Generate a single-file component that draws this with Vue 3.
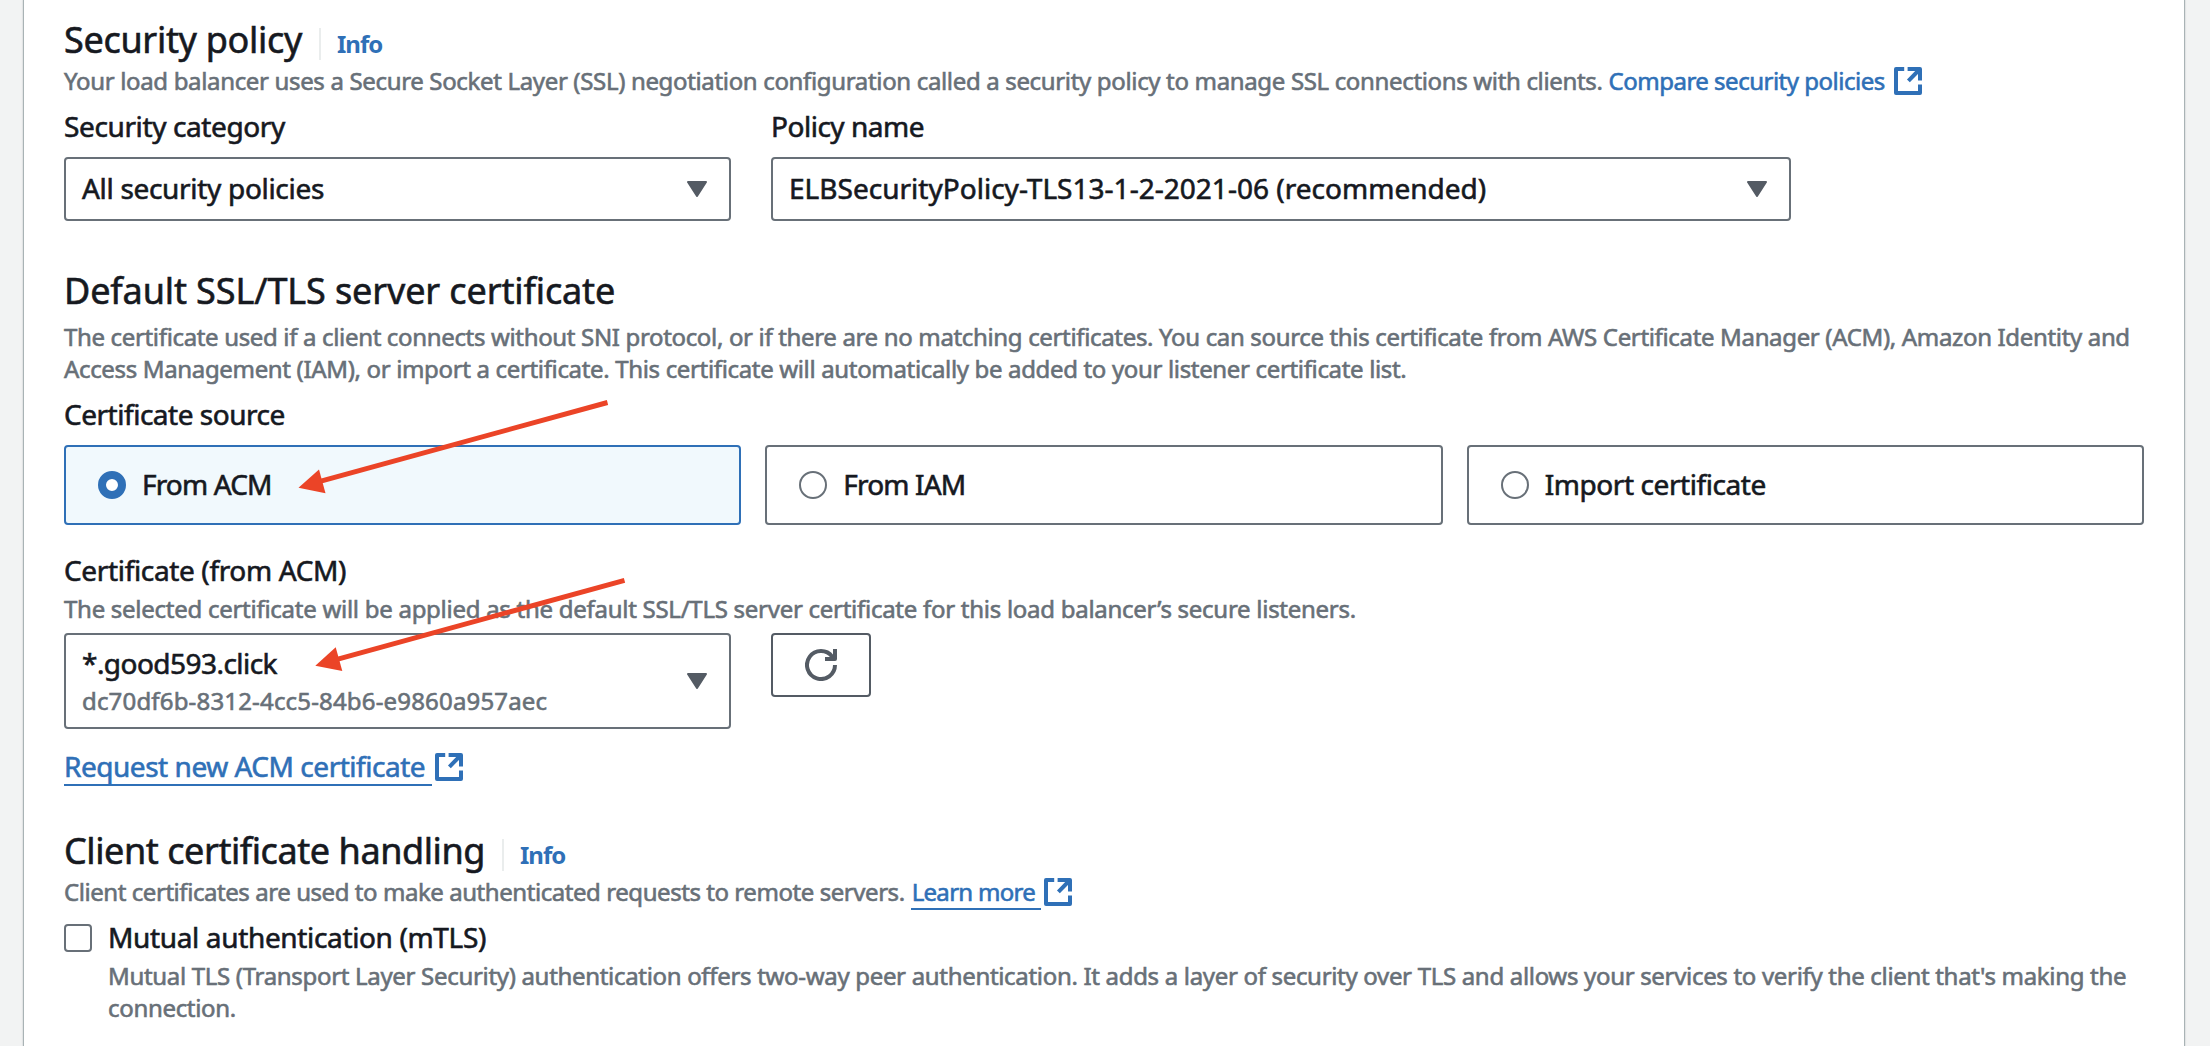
<script setup>
import { h } from 'vue'

const sources = [
  { id: 'acm', label: 'From ACM', selected: true },
  { id: 'iam', label: 'From IAM', selected: false },
  { id: 'import', label: 'Import certificate', selected: false },
]

const ExternalIcon = () =>
  h('svg', { viewBox: '0 0 16 16', width: 32, height: 32, fill: 'none', stroke: 'currentColor', 'stroke-width': 2, 'stroke-linejoin': 'round' }, [
    h('path', { d: 'M6.1 2H2v12h12V9.8' }),
    h('path', { d: 'M7.8 2H14v5.7M14 2 8.2 7.9' }),
  ])

const CaretIcon = () =>
  h('svg', { viewBox: '0 0 20 16', width: 20, height: 16, fill: '#545b64', stroke: '#545b64', 'stroke-width': 2, 'stroke-linejoin': 'round' }, [
    h('path', { d: 'M1 1h18l-9 14z' }),
  ])
</script>

<template>
  <div class="page">
    <main class="panel">
      <section>
        <div class="heading">
          <h2 class="t-policy">Security policy</h2>
          <a class="info">Info</a>
        </div>
        <p class="desc"><span class="t-intro">Your load balancer uses a Secure Socket Layer (SSL) negotiation configuration called a security policy to manage SSL connections with clients.</span><a class="link compare"><span>Compare security policies</span><ExternalIcon /></a></p>
        <div class="fields">
          <div class="field narrow">
            <label class="t-category">Security category</label>
            <div class="select"><span class="t-all">All security policies</span><CaretIcon /></div>
          </div>
          <div class="field wide">
            <label class="t-name">Policy name</label>
            <div class="select"><span class="t-elb">ELBSecurityPolicy-TLS13-1-2-2021-06 (recommended)</span><CaretIcon /></div>
          </div>
        </div>
      </section>

      <section class="certificate">
        <h2 class="t-default">Default SSL/TLS server certificate</h2>
        <p class="desc certificate-desc">The certificate used if a client connects without SNI protocol, or if there are no matching certificates. You can source this certificate from AWS Certificate Manager (ACM), Amazon Identity and<br />Access Management (IAM), or import a certificate. This certificate will automatically be added to your listener certificate list.</p>
        <label class="source-label">Certificate source</label>
        <div class="tiles">
          <div v-for="s in sources" :key="s.id" class="tile" :class="[s.id, { selected: s.selected }]">
            <span class="radio"></span><span class="tile-label">{{ s.label }}</span>
          </div>
        </div>
        <label class="acm-label">Certificate (from ACM)</label>
        <p class="desc t-applied">The selected certificate will be applied as the default SSL/TLS server certificate for this load balancer’s secure listeners.</p>
        <div class="picker">
          <div class="select tall">
            <div class="option">
              <span class="domain">*.good593.click</span>
              <span class="cert-id">dc70df6b-8312-4cc5-84b6-e9860a957aec</span>
            </div>
            <CaretIcon />
          </div>
          <button class="refresh" aria-label="Refresh">
            <svg viewBox="0 0 16 16" width="32" height="32" fill="none" stroke="#545b64" stroke-width="2" stroke-linejoin="round">
              <path d="M15 8a7 7 0 1 1-1.4-4.2L14.6 5" />
              <path d="M10 5h5V0" />
            </svg>
          </button>
        </div>
        <a class="link request"><span class="underlined">Request new ACM certificate</span><ExternalIcon /></a>
      </section>

      <section class="client">
        <div class="heading">
          <h2 class="t-client">Client certificate handling</h2>
          <a class="info">Info</a>
        </div>
        <p class="desc"><span class="t-used">Client certificates are used to make authenticated requests to remote servers.</span><a class="link learn"><span class="underlined">Learn more</span><ExternalIcon /></a></p>
        <div class="mtls">
          <span class="checkbox"></span>
          <div>
            <label class="mtls-label">Mutual authentication (mTLS)</label>
            <p class="desc mtls-desc">Mutual TLS (Transport Layer Security) authentication offers two-way peer authentication. It adds a layer of security over TLS and allows your services to verify the client that's making the<br />connection.</p>
          </div>
        </div>
      </section>
    </main>

    <svg class="arrows" viewBox="0 0 2210 1046" width="2210" height="1046" fill="#eb4427" stroke="#eb4427">
      <path d="M607.5 402.5 320 481.3" stroke-width="5" />
      <path d="M298.5 487.7 319 469.5 325.5 493.3z" stroke="none" />
      <path d="M624.5 580.3 337 659.3" stroke-width="5" />
      <path d="M315.3 665.7 335.7 647.3 342.3 671z" stroke="none" />
    </svg>
  </div>
</template>

<style>
body {
  margin: 0;
  overflow: hidden;
}
</style>

<style scoped>
* {
  box-sizing: border-box;
}
.page {
  position: relative;
  width: 2210px;
  height: 1046px;
  padding: 0 26px 0 24px;
  overflow: hidden;
  background: #f2f3f3;
  color: #16191f;
  font: 400 28px/40px "Noto Sans", sans-serif;
  -webkit-text-stroke: 0.6px currentColor;
}
.panel {
  height: 1046px;
  padding: 18px 40px 0;
  background: #fff;
  box-shadow: 1px 0 1px 0 #a9b3b5, -1px 0 1px 0 #a9b3b5, 0 0 3px 0 #d5dbdb;
  white-space: nowrap;
}
h2 {
  margin: 0;
  font-size: 36px;
  font-weight: 400;
  line-height: 44px;
}
p {
  margin: 0;
}
label {
  display: block;
}
.heading {
  display: flex;
  align-items: baseline;
}
.info {
  position: relative;
  margin-left: 17px;
  padding-left: 18px;
  color: #2f70b7;
  font-size: 24px;
  font-weight: 700;
  letter-spacing: -1px;
  line-height: 32px;
  -webkit-text-stroke: 0;
}
.info::before {
  content: "";
  position: absolute;
  left: 0;
  top: 0;
  width: 2px;
  height: 32px;
  background: #eaeded;
}
.desc {
  display: flex;
  margin-top: 3px;
  color: #687078;
  font-size: 24px;
  line-height: 32px;
}
.link {
  display: flex;
  color: #2f70b7;
}
.link svg {
  flex: none;
}
.compare {
  margin-left: 6px;
  letter-spacing: -0.5px;
}
.compare svg {
  margin-left: 7.5px;
}
.t-policy { letter-spacing: -0.31px; }
.t-default { letter-spacing: -0.12px; }
.t-client { letter-spacing: -0.43px; }
.t-intro { letter-spacing: -0.34px; }
.t-category { letter-spacing: -0.38px; }
.t-all { letter-spacing: -0.31px; }
.t-name { letter-spacing: -0.48px; }
.t-elb { letter-spacing: 0.02px; }
.t-used { letter-spacing: -0.44px; }
.t-applied { letter-spacing: -0.27px; }

.fields {
  display: flex;
  gap: 40px;
  margin-top: 9px;
}
.narrow { width: 667px; }
.wide { width: 1020px; }
.select {
  display: flex;
  align-items: center;
  justify-content: space-between;
  height: 64px;
  margin-top: 11px;
  padding: 0 22px 0 16px;
  border: 2px solid #687078;
  border-radius: 4px;
}
.select > span {
  padding-bottom: 2px;
}
.certificate {
  margin-top: 48px;
}
.certificate-desc {
  display: block;
  margin-top: 8px;
  letter-spacing: -0.34px;
}
.source-label {
  margin-top: 9px;
  letter-spacing: -0.48px;
}
.tiles {
  display: grid;
  grid-template-columns: repeat(3, 1fr);
  gap: 24px;
  margin-top: 11px;
}
.tile {
  display: flex;
  align-items: center;
  gap: 16px;
  height: 80px;
  padding-left: 32px;
  border: 2px solid #687078;
  border-radius: 4px;
}
.tile-label {
  padding-bottom: 2px;
}
.tile.selected {
  border-color: #2f70b7;
  background: #f1f9fd;
}
.radio {
  width: 28px;
  height: 28px;
  border: 2px solid #687078;
  border-radius: 50%;
  background: #fff;
}
.selected .radio {
  border: 8px solid #2f70b7;
}
.acm .tile-label { letter-spacing: -0.85px; }
.iam .tile-label { letter-spacing: -0.85px; }
.import .tile-label { letter-spacing: -0.42px; }
.acm-label {
  margin-top: 25px;
  letter-spacing: -0.35px;
}
.t-applied {
  margin-top: 3px;
}
.picker {
  display: flex;
  gap: 40px;
  margin-top: 8px;
}
.tall {
  width: 667px;
  height: 96px;
  margin-top: 0;
}
.option {
  display: flex;
  flex-direction: column;
  padding-top: 2px;
}
.domain {
  letter-spacing: -0.54px;
  line-height: 38px;
}
.cert-id {
  color: #687078;
  font-size: 24px;
  letter-spacing: 0.17px;
  line-height: 38px;
}
.refresh {
  display: flex;
  align-items: center;
  justify-content: center;
  width: 100px;
  height: 64px;
  padding: 0;
  border: 2px solid #545b64;
  border-radius: 4px;
  background: #fff;
}
.request {
  height: 40px;
  margin-top: 17px;
  letter-spacing: -0.47px;
}
.underlined {
  box-shadow: 0 2px 0 #2f70b7;
}
.request .underlined {
  height: 38px;
  padding-right: 7px;
}
.request svg {
  margin: 5px 0 0 1px;
}
.client {
  margin-top: 43px;
}
.learn {
  margin-left: 6px;
  letter-spacing: -0.7px;
}
.learn .underlined {
  padding: 0 6px 0 1px;
}
.learn svg {
  margin-left: 1px;
}
.mtls {
  display: flex;
  gap: 16px;
  margin-top: 9px;
}
.checkbox {
  width: 28px;
  height: 28px;
  margin-top: 7px;
  border: 2px solid #687078;
  border-radius: 4px;
}
.mtls-label {
  letter-spacing: -0.35px;
}
.mtls-desc {
  display: block;
  margin-top: 3px;
  letter-spacing: -0.316px;
}
.arrows {
  position: absolute;
  left: 0;
  top: 0;
}
</style>
